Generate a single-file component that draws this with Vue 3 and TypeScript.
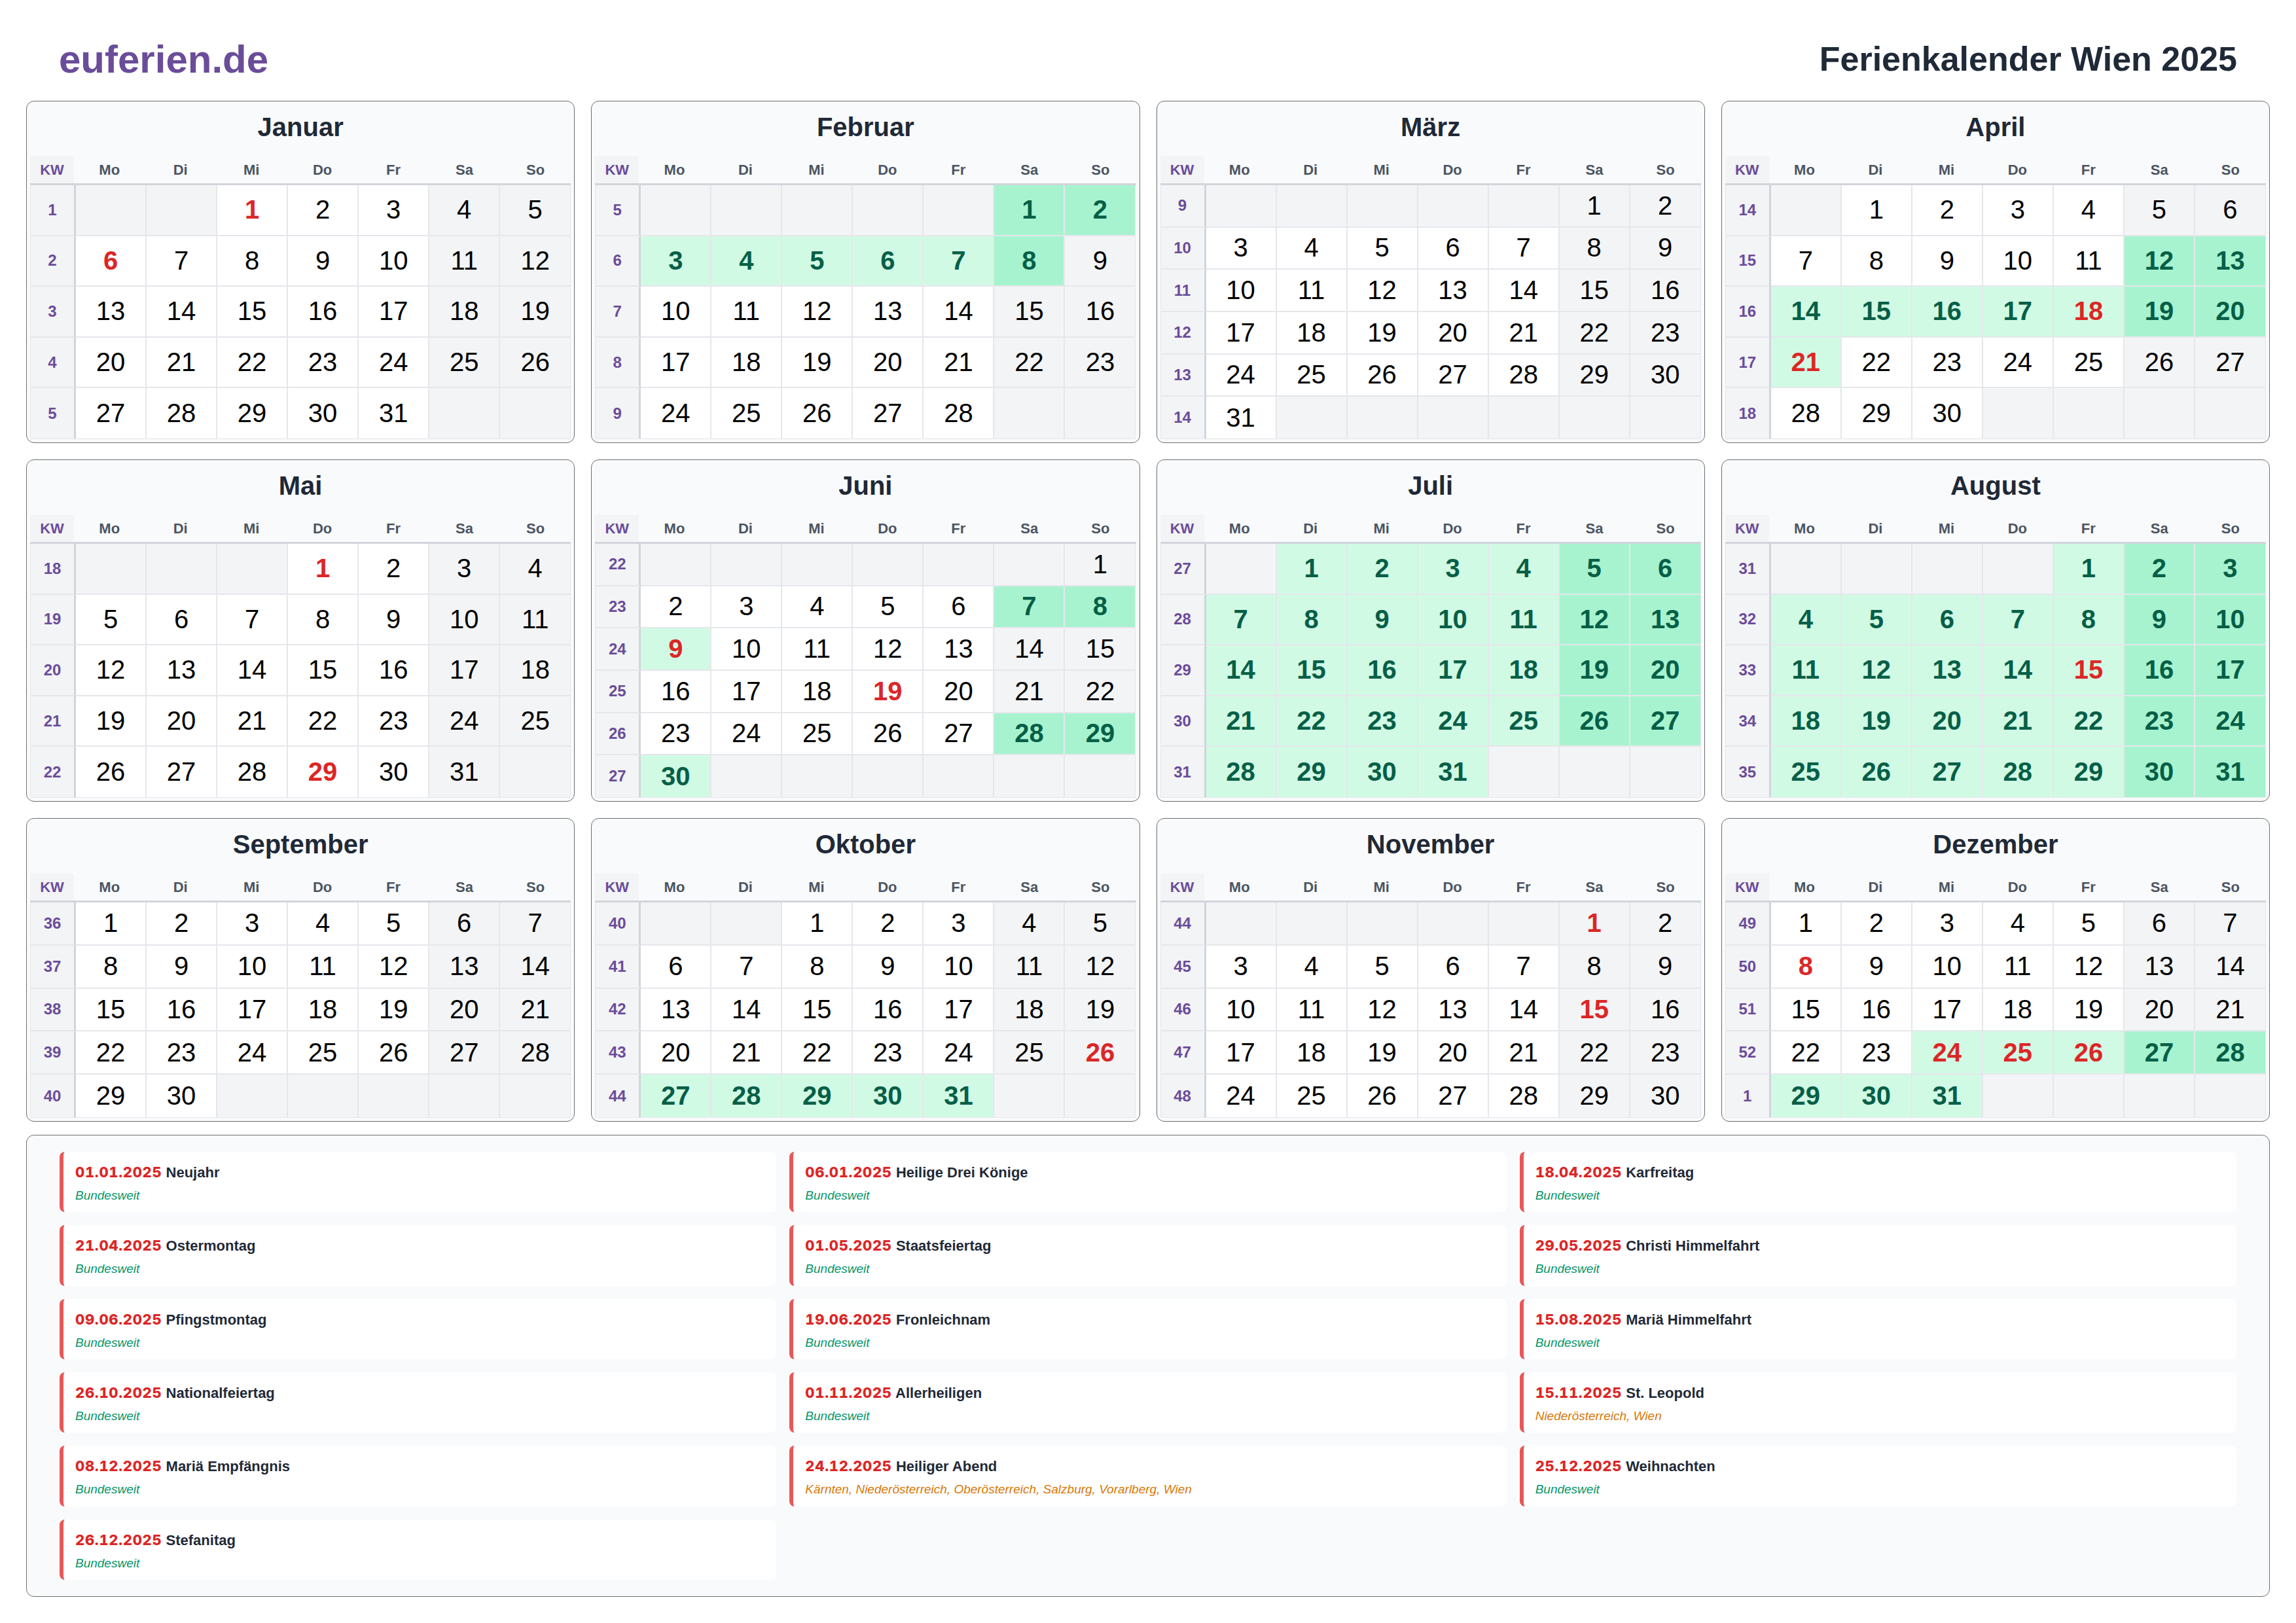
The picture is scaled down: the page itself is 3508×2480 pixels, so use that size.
<script setup lang="ts">
const monthNames = ['Januar', 'Februar', 'März', 'April', 'Mai', 'Juni', 'Juli', 'August', 'September', 'Oktober', 'November', 'Dezember']
const weekdays = ['Mo', 'Di', 'Mi', 'Do', 'Fr', 'Sa', 'So']
const year = 2025

type Holiday = { date: string; name: string; region: string }

const NATIONWIDE = 'Bundesweit'

const holidays: Holiday[] = [
  { date: '01.01.2025', name: 'Neujahr', region: NATIONWIDE },
  { date: '06.01.2025', name: 'Heilige Drei Könige', region: NATIONWIDE },
  { date: '18.04.2025', name: 'Karfreitag', region: NATIONWIDE },
  { date: '21.04.2025', name: 'Ostermontag', region: NATIONWIDE },
  { date: '01.05.2025', name: 'Staatsfeiertag', region: NATIONWIDE },
  { date: '29.05.2025', name: 'Christi Himmelfahrt', region: NATIONWIDE },
  { date: '09.06.2025', name: 'Pfingstmontag', region: NATIONWIDE },
  { date: '19.06.2025', name: 'Fronleichnam', region: NATIONWIDE },
  { date: '15.08.2025', name: 'Mariä Himmelfahrt', region: NATIONWIDE },
  { date: '26.10.2025', name: 'Nationalfeiertag', region: NATIONWIDE },
  { date: '01.11.2025', name: 'Allerheiligen', region: NATIONWIDE },
  { date: '15.11.2025', name: 'St. Leopold', region: 'Niederösterreich, Wien' },
  { date: '08.12.2025', name: 'Mariä Empfängnis', region: NATIONWIDE },
  { date: '24.12.2025', name: 'Heiliger Abend', region: 'Kärnten, Niederösterreich, Oberösterreich, Salzburg, Vorarlberg, Wien' },
  { date: '25.12.2025', name: 'Weihnachten', region: NATIONWIDE },
  { date: '26.12.2025', name: 'Stefanitag', region: NATIONWIDE },
]

// school holidays as [month, firstDay, lastDay]
const schoolRanges: [number, number, number][] = [
  [1, 1, 8],
  [3, 12, 21],
  [5, 7, 9],
  [5, 28, 30],
  [6, 1, 31],
  [7, 1, 31],
  [9, 27, 31],
  [11, 24, 31],
]

const redDays = new Set(holidays.map((h) => {
  const [d, m] = h.date.split('.')
  return `${Number(m) - 1}-${Number(d)}`
}))

function isoWeek(date: Date): number {
  const d = new Date(Date.UTC(date.getFullYear(), date.getMonth(), date.getDate()))
  d.setUTCDate(d.getUTCDate() + 4 - (d.getUTCDay() || 7))
  const start = Date.UTC(d.getUTCFullYear(), 0, 1)
  return Math.ceil(((d.getTime() - start) / 86400000 + 1) / 7)
}

type Cell = { key: string; day: number | null; classes: string[] }
type Week = { kw: number; cells: Cell[] }

function buildMonth(month: number): Week[] {
  const first = new Date(year, month, 1)
  const length = new Date(year, month + 1, 0).getDate()
  const offset = (first.getDay() + 6) % 7
  const weeks: Week[] = []
  for (let i = 0; i < Math.ceil((offset + length) / 7); i++) {
    const cells: Cell[] = []
    for (let col = 0; col < 7; col++) {
      const day = i * 7 + col - offset + 1
      const inMonth = day >= 1 && day <= length
      const weekend = col >= 5
      const school = inMonth && schoolRanges.some(([m, a, b]) => m === month && day >= a && day <= b)
      const classes: string[] = []
      if (!inMonth || weekend) classes.push('muted')
      if (school) classes.push(weekend ? 'school-weekend' : 'school')
      if (inMonth && redDays.has(`${month}-${day}`)) classes.push('public')
      cells.push({ key: `${i}-${col}`, day: inMonth ? day : null, classes })
    }
    weeks.push({ kw: isoWeek(new Date(year, month, i * 7 - offset + 1)), cells })
  }
  return weeks
}

const months = monthNames.map((name, i) => ({ name, weeks: buildMonth(i) }))
</script>

<template>
  <main class="page">
    <header class="top">
      <div class="logo">euferien.de</div>
      <h1 class="title">Ferienkalender Wien 2025</h1>
    </header>

    <section class="months">
      <article v-for="month in months" :key="month.name" class="month">
        <h2 class="month-name">{{ month.name }}</h2>
        <div class="sheet-head">
          <div class="head kw-head">KW</div>
          <div v-for="wd in weekdays" :key="wd" class="head">{{ wd }}</div>
        </div>
        <div class="sheet" :style="{ gridTemplateRows: `repeat(${month.weeks.length}, 1fr)` }">
          <template v-for="week in month.weeks" :key="week.kw">
            <div class="kw">{{ week.kw }}</div>
            <div v-for="cell in week.cells" :key="cell.key" class="cell" :class="cell.classes">{{ cell.day }}</div>
          </template>
        </div>
      </article>
    </section>

    <section class="holidays">
      <div v-for="h in holidays" :key="h.date" class="holiday">
        <div class="holiday-line"><span class="holiday-date">{{ h.date }}</span> {{ h.name }}</div>
        <div class="region" :class="{ partial: h.region !== NATIONWIDE }">{{ h.region }}</div>
      </div>
    </section>
  </main>
</template>

<style>
html,
body {
  margin: 0;
  background: #fff;
}
</style>

<style scoped>
.page {
  width: 3508px;
  height: 2480px;
  box-sizing: border-box;
  padding: 0 40px;
  background: #fff;
  font-family: "Liberation Sans", Arial, sans-serif;
}

.top {
  height: 154px;
  padding: 26px 50px 0;
  display: flex;
  align-items: center;
  justify-content: space-between;
  box-sizing: border-box;
}

.logo {
  font-size: 60px;
  font-weight: 700;
  color: #6b4c9a;
}

.title {
  margin: 0;
  font-size: 52px;
  font-weight: 700;
  color: #1f2937;
}

.months {
  display: grid;
  grid-template-columns: repeat(4, 1fr);
  grid-template-rows: 523px 523px 464px;
  gap: 25px;
}

.month {
  display: flex;
  flex-direction: column;
  box-sizing: border-box;
  padding: 0 5px 5px;
  background: #f9fafb;
  border: 1px solid #6e6e6e;
  border-radius: 12px;
  min-width: 0;
}

.month-name {
  margin: 0;
  height: 84px;
  line-height: 78px;
  text-align: center;
  font-size: 40px;
  font-weight: 700;
  color: #1f2937;
}

.sheet-head {
  display: grid;
  grid-template-columns: 67px repeat(7, 1fr);
  height: 44px;
}

.sheet {
  flex: 1;
  display: grid;
  grid-template-columns: 70px repeat(7, 1fr);
  min-height: 0;
}

.sheet > :nth-last-child(-n + 8) {
  border-bottom-width: 1px;
}

.head {
  display: flex;
  align-items: center;
  justify-content: center;
  font-size: 22px;
  font-weight: 700;
  color: #4b5563;
  border-bottom: 3px solid #d1d5db;
}

.kw-head {
  color: #6b4c9a;
  background: #f3f4f6;
}

.kw {
  display: flex;
  align-items: center;
  justify-content: center;
  font-size: 24px;
  font-weight: 700;
  color: #6b4c9a;
  background: #f3f4f6;
  border-left: 1px solid #e5e7eb;
  border-right: 3px solid #d1d5db;
  border-bottom: 2px solid #e5e7eb;
}

.cell {
  display: flex;
  align-items: center;
  justify-content: center;
  font-size: 40px;
  color: #000;
  background: #fff;
  border-right: 2px solid #e5e7eb;
  border-bottom: 2px solid #e5e7eb;
}

.cell:nth-child(8n) {
  border-right-width: 1px;
}

.cell.muted {
  background: #f3f4f6;
}

.cell.school {
  background: #d1fae5;
  color: #065f46;
  font-weight: 700;
}

.cell.school-weekend {
  background: #a7f3d0;
  color: #065f46;
  font-weight: 700;
}

.cell.public {
  color: #dc2626;
  font-weight: 700;
}

.holidays {
  margin-top: 20px;
  display: grid;
  grid-template-columns: repeat(3, 1fr);
  grid-template-rows: repeat(6, 1fr);
  gap: 20px;
  box-sizing: border-box;
  height: 706px;
  padding: 25px 50px;
  background: #f9fafb;
  border: 1px solid #6e6e6e;
  border-radius: 12px;
}

.holiday {
  box-sizing: border-box;
  padding: 18px 18px 0;
  background: #fff;
  border-left: 6px solid #e85858;
  border-radius: 8px;
}

.holiday-line {
  font-size: 22px;
  font-weight: 700;
  color: #1f2937;
}

.holiday-date {
  font-family: Inter, "Liberation Sans", sans-serif;
  font-weight: 800;
  font-variant-numeric: tabular-nums;
  letter-spacing: 0.7px;
  color: #dc2626;
}

.region {
  margin-top: 11px;
  font-size: 19px;
  font-style: italic;
  color: #059669;
}

.region.partial {
  color: #d97706;
}
</style>
